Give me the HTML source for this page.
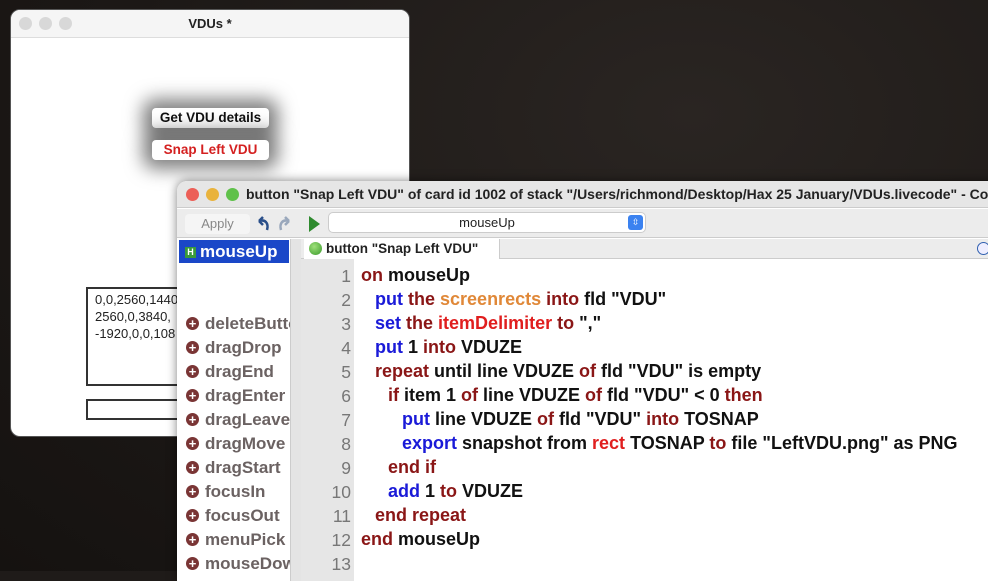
<!DOCTYPE html>
<html><head><meta charset="utf-8"><style>
*{margin:0;padding:0;box-sizing:border-box}
body{width:988px;height:571px;overflow:hidden;background:#1f1b19;font-family:"Liberation Sans",sans-serif;position:relative}
.bg{position:absolute;inset:0;background:radial-gradient(ellipse at 70% 20%,#2a2522 0%,#1c1816 60%,#151210 100%)}
.w1{position:absolute;left:10px;top:9px;width:400px;height:428px;background:#fff;border-radius:10px;overflow:hidden;border:1px solid #555}
.w1 .tb{height:28px;background:#f5f5f5;border-bottom:1px solid #ddd;text-align:center;font-size:13px;font-weight:bold;line-height:27px;color:#222}
.dot{position:absolute;width:13px;height:13px;border-radius:50%}
.btn{position:absolute;left:141px;width:117px;height:20px;border-radius:4px;background:#fff;text-align:center;font-size:13.5px;font-weight:bold;line-height:20px;box-shadow:0 0 18px 9px rgba(0,0,0,.5)}
.fld{position:absolute;border:2px solid #333;background:#fff;font-size:13px;line-height:17px;padding:2px 7px;color:#222}
.w2{position:absolute;left:177px;top:181px;width:830px;height:400px;background:#fff;border-radius:10px 0 0 0;overflow:hidden;box-shadow:0 0 10px rgba(0,0,0,.5)}
.w2 .tb{height:27px;background:#e6e6e6;font-size:14px;font-weight:bold;line-height:27px;color:#222;padding-left:69px;white-space:nowrap;border-bottom:1px solid #ccc}
.tool{position:absolute;top:28px;left:0;right:0;height:29px;background:#ececec;border-bottom:1px solid #ccc}
.list{position:absolute;left:1px;top:58px;width:113px;height:350px;background:#fff;border-right:1px solid #ccc;overflow:hidden}
.li{position:absolute;left:8px;font-size:17px;font-weight:bold;color:#6b6262;white-space:nowrap;width:104px;overflow:hidden}
.li i{display:inline-block;width:13px;height:13px;border-radius:50%;background:#7a3535;color:#fff;font-style:normal;font-size:13px;line-height:13px;text-align:center;margin-right:6px;vertical-align:1px}
.gut{position:absolute;left:114px;top:58px;width:10px;height:350px;background:#e4e4e4}
.tabs{position:absolute;left:124px;top:58px;right:0;height:20px;background:#ececec;border-bottom:1px solid #ccc}
.nums{position:absolute;left:124px;top:78px;width:53px;height:330px;background:#e6e6e6}
.n{position:absolute;right:3px;font-size:17.5px;color:#777;text-align:right}
.code{position:absolute;left:184px;top:78px;font-size:18px;font-weight:bold;color:#111;white-space:pre}
.l{position:absolute;left:0;white-space:pre}
.i1{left:14px}.i2{left:27px}.i3{left:41px}
.k{color:#8a1616}.b{color:#1a1ad8}.o{color:#e08838}.r{color:#e01e1e}
</style></head><body>
<div class="bg"></div>
<div class="w1">
<div class="tb">VDUs *</div>
<div class="dot" style="left:8px;top:7px;background:#d8d8d8"></div>
<div class="dot" style="left:28px;top:7px;background:#d8d8d8"></div>
<div class="dot" style="left:48px;top:7px;background:#d8d8d8"></div>
<div class="btn" style="top:98px;color:#111">Get VDU details</div>
<div class="btn" style="top:130px;color:#d42020">Snap Left VDU</div>
<div class="fld" style="left:75px;top:277px;width:110px;height:99px">0,0,2560,1440<br>2560,0,3840,<br>-1920,0,0,108</div>
<div class="fld" style="left:75px;top:389px;width:110px;height:21px"></div>
</div>
<div class="w2">
<div class="tb">button "Snap Left VDU" of card id 1002 of stack "/Users/richmond/Desktop/Hax 25 January/VDUs.livecode" - Code</div>
<div class="dot" style="left:9px;top:7px;background:#ec5f57"></div>
<div class="dot" style="left:29px;top:7px;background:#e9b33c"></div>
<div class="dot" style="left:49px;top:7px;background:#5fc14a"></div>
<div class="tool">
<div style="position:absolute;left:8px;top:5px;width:65px;height:20px;background:#f5f5f5;border-radius:4px;font-size:13px;color:#888;text-align:center;line-height:20px">Apply</div>
<svg style="position:absolute;left:78px;top:6px" width="50" height="18"><path d="M12 15 C14 8 10 4 4 6 M4 6 L8 2 M4 6 L8 10" stroke="#2a4f8a" stroke-width="2.5" fill="none"/><path d="M26 15 C24 8 28 4 34 6 M34 6 L30 2 M34 6 L30 10" stroke="#9aa8bc" stroke-width="2.5" fill="none"/></svg>
<svg style="position:absolute;left:130px;top:6px" width="14" height="18"><path d="M2 1 L13 9 L2 17Z" fill="#2e8a2e"/></svg>
<div style="position:absolute;left:151px;top:3px;width:318px;height:21px;background:#fff;border-radius:5px;border:1px solid #ccc;font-size:13px;text-align:center;line-height:19px;color:#222">mouseUp
<div style="position:absolute;right:2px;top:2px;width:15px;height:15px;background:#3b82f0;border-radius:3px;color:#fff;font-size:9px;line-height:15px">⇳</div></div>
</div>
<div class="list">
<div style="position:absolute;left:1px;top:1px;width:110px;height:23px;background:#1a47c8;color:#fff;font-size:17px;font-weight:bold;line-height:23px;padding-left:6px"><span style="display:inline-block;width:11px;height:11px;background:#3a9a3a;font-size:9px;line-height:11px;text-align:center;vertical-align:2px;margin-right:4px">H</span>mouseUp</div>
<div class="li" style="top:75px"><i>+</i>deleteButton</div>
<div class="li" style="top:99px"><i>+</i>dragDrop</div>
<div class="li" style="top:123px"><i>+</i>dragEnd</div>
<div class="li" style="top:147px"><i>+</i>dragEnter</div>
<div class="li" style="top:171px"><i>+</i>dragLeave</div>
<div class="li" style="top:195px"><i>+</i>dragMove</div>
<div class="li" style="top:219px"><i>+</i>dragStart</div>
<div class="li" style="top:243px"><i>+</i>focusIn</div>
<div class="li" style="top:267px"><i>+</i>focusOut</div>
<div class="li" style="top:291px"><i>+</i>menuPick</div>
<div class="li" style="top:315px"><i>+</i>mouseDown</div>
</div>
<div class="gut"></div>
<div class="tabs"><div style="position:absolute;left:3px;top:0;width:196px;height:20px;background:#fff;border-right:1px solid #ccc;font-size:13.5px;font-weight:bold;line-height:20px;padding-left:22px;color:#222"><span style="position:absolute;left:5px;top:3px;width:13px;height:13px;border-radius:50%;background:radial-gradient(circle at 40% 35%,#9ee07a,#3a9a2a)"></span>button "Snap Left VDU"</div>
<div style="position:absolute;left:676px;top:3px;width:13px;height:13px;border-radius:50%;border:1px solid #3060b0;background:#eef"></div></div>
<div class="nums">
<div class="n" style="top:7px">1</div><div class="n" style="top:31px">2</div><div class="n" style="top:55px">3</div><div class="n" style="top:79px">4</div><div class="n" style="top:103px">5</div><div class="n" style="top:127px">6</div><div class="n" style="top:151px">7</div><div class="n" style="top:175px">8</div><div class="n" style="top:199px">9</div><div class="n" style="top:223px">10</div><div class="n" style="top:247px">11</div><div class="n" style="top:271px">12</div><div class="n" style="top:295px">13</div>
</div>
<div class="code">
<div class="l" style="top:6px"><span class="k">on</span> mouseUp</div>
<div class="l i1" style="top:30px"><span class="b">put</span> <span class="k">the</span> <span class="o">screenrects</span> <span class="k">into</span> fld "VDU"</div>
<div class="l i1" style="top:54px"><span class="b">set</span> <span class="k">the</span> <span class="r">itemDelimiter</span> <span class="k">to</span> ","</div>
<div class="l i1" style="top:78px"><span class="b">put</span> 1 <span class="k">into</span> VDUZE</div>
<div class="l i1" style="top:102px"><span class="k">repeat</span> until line VDUZE <span class="k">of</span> fld "VDU" is empty</div>
<div class="l i2" style="top:126px"><span class="k">if</span> item 1 <span class="k">of</span> line VDUZE <span class="k">of</span> fld "VDU" &lt; 0 <span class="k">then</span></div>
<div class="l i3" style="top:150px"><span class="b">put</span> line VDUZE <span class="k">of</span> fld "VDU" <span class="k">into</span> TOSNAP</div>
<div class="l i3" style="top:174px"><span class="b">export</span> snapshot from <span class="r">rect</span> TOSNAP <span class="k">to</span> file "LeftVDU.png" as PNG</div>
<div class="l i2" style="top:198px"><span class="k">end if</span></div>
<div class="l i2" style="top:222px"><span class="b">add</span> 1 <span class="k">to</span> VDUZE</div>
<div class="l i1" style="top:246px"><span class="k">end repeat</span></div>
<div class="l" style="top:270px"><span class="k">end</span> mouseUp</div>
</div>
</div>
</body></html>
